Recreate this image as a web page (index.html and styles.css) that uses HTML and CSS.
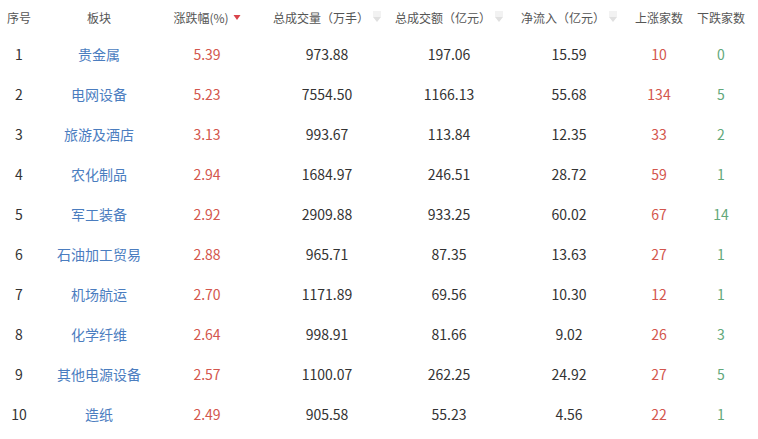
FILE: index.html
```html
<!DOCTYPE html>
<html lang="zh">
<head>
<meta charset="utf-8">
<link rel="stylesheet" href="styles.css">
</head>
<body>
<div class="table">
  <div class="row head">
    <div class="cell">序号</div>
    <div class="cell">板块</div>
    <div class="cell">涨跌幅(%)<svg class="sort" width="8" height="12" viewBox="0 0 8 12"><path d="M0.5 4 L7.5 4 L4 9 Z" fill="#d9434a"/></svg></div>
    <div class="cell">总成交量（万手）<svg class="sort" width="8" height="12" viewBox="0 0 8 12"><rect x="0" y="0" width="8" height="6" fill="#f2f2f2"/><path d="M0 6 L8 6 L4 11 Z" fill="#e0e0e0"/></svg></div>
    <div class="cell">总成交额（亿元）<svg class="sort" width="8" height="12" viewBox="0 0 8 12"><rect x="0" y="0" width="8" height="6" fill="#f2f2f2"/><path d="M0 6 L8 6 L4 11 Z" fill="#e0e0e0"/></svg></div>
    <div class="cell">净流入（亿元）<svg class="sort" width="8" height="12" viewBox="0 0 8 12"><rect x="0" y="0" width="8" height="6" fill="#f2f2f2"/><path d="M0 6 L8 6 L4 11 Z" fill="#e0e0e0"/></svg></div>
    <div class="cell">上涨家数</div>
    <div class="cell">下跌家数</div>
  </div>
  <div class="row"><div class="cell">1</div><div class="cell name">贵金属</div><div class="cell up">5.39</div><div class="cell">973.88</div><div class="cell">197.06</div><div class="cell">15.59</div><div class="cell up">10</div><div class="cell down">0</div></div>
  <div class="row"><div class="cell">2</div><div class="cell name">电网设备</div><div class="cell up">5.23</div><div class="cell">7554.50</div><div class="cell">1166.13</div><div class="cell">55.68</div><div class="cell up">134</div><div class="cell down">5</div></div>
  <div class="row"><div class="cell">3</div><div class="cell name">旅游及酒店</div><div class="cell up">3.13</div><div class="cell">993.67</div><div class="cell">113.84</div><div class="cell">12.35</div><div class="cell up">33</div><div class="cell down">2</div></div>
  <div class="row"><div class="cell">4</div><div class="cell name">农化制品</div><div class="cell up">2.94</div><div class="cell">1684.97</div><div class="cell">246.51</div><div class="cell">28.72</div><div class="cell up">59</div><div class="cell down">1</div></div>
  <div class="row"><div class="cell">5</div><div class="cell name">军工装备</div><div class="cell up">2.92</div><div class="cell">2909.88</div><div class="cell">933.25</div><div class="cell">60.02</div><div class="cell up">67</div><div class="cell down">14</div></div>
  <div class="row"><div class="cell">6</div><div class="cell name">石油加工贸易</div><div class="cell up">2.88</div><div class="cell">965.71</div><div class="cell">87.35</div><div class="cell">13.63</div><div class="cell up">27</div><div class="cell down">1</div></div>
  <div class="row"><div class="cell">7</div><div class="cell name">机场航运</div><div class="cell up">2.70</div><div class="cell">1171.89</div><div class="cell">69.56</div><div class="cell">10.30</div><div class="cell up">12</div><div class="cell down">1</div></div>
  <div class="row"><div class="cell">8</div><div class="cell name">化学纤维</div><div class="cell up">2.64</div><div class="cell">998.91</div><div class="cell">81.66</div><div class="cell">9.02</div><div class="cell up">26</div><div class="cell down">3</div></div>
  <div class="row"><div class="cell">9</div><div class="cell name">其他电源设备</div><div class="cell up">2.57</div><div class="cell">1100.07</div><div class="cell">262.25</div><div class="cell">24.92</div><div class="cell up">27</div><div class="cell down">5</div></div>
  <div class="row"><div class="cell">10</div><div class="cell name">造纸</div><div class="cell up">2.49</div><div class="cell">905.58</div><div class="cell">55.23</div><div class="cell">4.56</div><div class="cell up">22</div><div class="cell down">1</div></div>
</div>
</body>
</html>
```
FILE: styles.css
```css
html, body {
  margin: 0;
  padding: 0;
  background: #ffffff;
  overflow: hidden;
}
body {
  font-family: "Noto Sans CJK SC", "Noto Sans", sans-serif;
  color: #333333;
}
.table {
  width: 764px;
}
.row {
  display: grid;
  grid-template-columns: 38px 122px 94px 146px 98px 142px 38px 86px;
  height: 40px;
  align-items: center;
  font-size: 14px;
}
.row.head {
  height: 34px;
  font-size: 12px;
  color: #555555;
}
.cell {
  display: flex;
  justify-content: center;
  align-items: center;
  white-space: nowrap;
}
.sort {
  margin-left: 4px;
  flex: none;
}
.name {
  color: #4b7dbf;
}
.up {
  color: #d3564d;
}
.down {
  color: #62a87a;
}
```
